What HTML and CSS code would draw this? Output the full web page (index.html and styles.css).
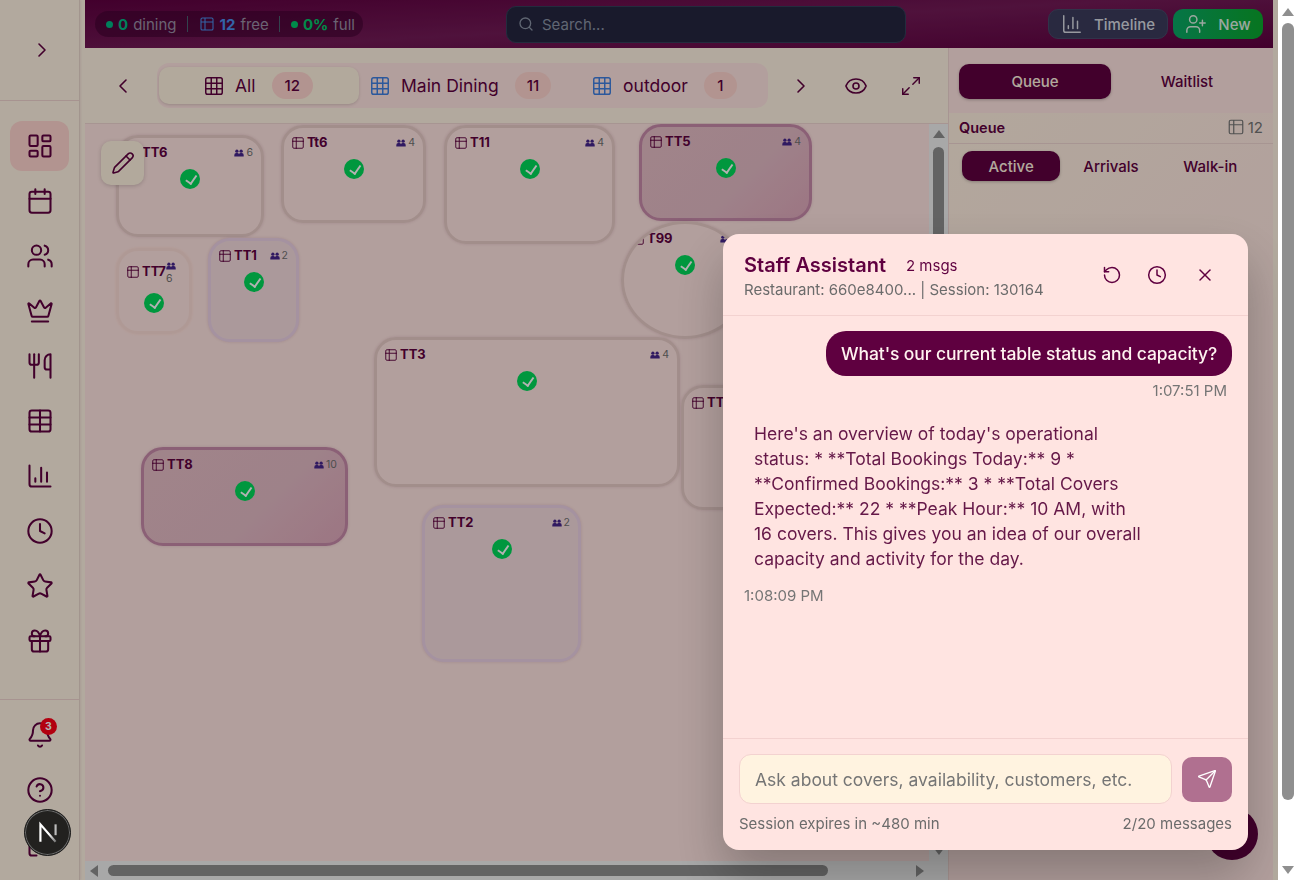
FILE: index.html
```html
<!DOCTYPE html>
<html lang="en">
<head>
    <meta charset="UTF-8">
    <title>Floor Plan</title>
    <link rel="stylesheet" href="styles.css">
</head>
<body>
    <!-- icon sprite -->
    <svg class="sprite" xmlns="http://www.w3.org/2000/svg">
        <symbol id="i-dash" viewBox="0 0 24 24"><rect x="3" y="3" width="7" height="9" rx="1"/><rect x="14" y="3" width="7" height="5" rx="1"/><rect x="14" y="12" width="7" height="9" rx="1"/><rect x="3" y="16" width="7" height="5" rx="1"/></symbol>
        <symbol id="i-cal" viewBox="0 0 24 24"><path d="M8 2v4M16 2v4"/><rect x="3" y="4" width="18" height="18" rx="2"/><path d="M3 10h18"/></symbol>
        <symbol id="i-users" viewBox="0 0 24 24"><path d="M16 21v-2a4 4 0 0 0-4-4H6a4 4 0 0 0-4 4v2"/><circle cx="9" cy="7" r="4"/><path d="M22 21v-2a4 4 0 0 0-3-3.87"/><path d="M16 3.13a4 4 0 0 1 0 7.75"/></symbol>
        <symbol id="i-crown" viewBox="0 0 24 24"><path d="M11.562 3.266a.5.5 0 0 1 .876 0L15.39 8.87a1 1 0 0 0 1.516.294L21.183 5.5a.5.5 0 0 1 .798.519l-2.834 10.246a1 1 0 0 1-.956.734H5.81a1 1 0 0 1-.957-.734L2.02 6.02a.5.5 0 0 1 .798-.519l4.276 3.664a1 1 0 0 0 1.516-.294z"/><path d="M5 21h14"/></symbol>
        <symbol id="i-utensils" viewBox="0 0 24 24"><path d="M3 2v7c0 1.1.9 2 2 2h4a2 2 0 0 0 2-2V2"/><path d="M7 2v20"/><path d="M21 15V2a5 5 0 0 0-5 5v6c0 1.1.9 2 2 2h3Zm0 0v7"/></symbol>
        <symbol id="i-table" viewBox="0 0 24 24"><path d="M12 3v18"/><rect x="3" y="3" width="18" height="18" rx="2"/><path d="M3 9h18M3 15h18"/></symbol>
        <symbol id="i-chart" viewBox="0 0 24 24"><path d="M3 3v16a2 2 0 0 0 2 2h16"/><path d="M18 17V9M13 17V5M8 17v-3"/></symbol>
        <symbol id="i-clock" viewBox="0 0 24 24"><circle cx="12" cy="12" r="10"/><path d="M12 6v6l4 2"/></symbol>
        <symbol id="i-star" viewBox="0 0 24 24"><path d="M11.525 2.295a.53.53 0 0 1 .95 0l2.31 4.679a2.123 2.123 0 0 0 1.595 1.16l5.166.756a.53.53 0 0 1 .294.904l-3.736 3.638a2.123 2.123 0 0 0-.611 1.878l.882 5.14a.53.53 0 0 1-.771.56l-4.618-2.428a2.122 2.122 0 0 0-1.973 0L6.396 21.01a.53.53 0 0 1-.77-.56l.881-5.139a2.122 2.122 0 0 0-.611-1.879L2.16 9.795a.53.53 0 0 1 .294-.906l5.165-.755a2.122 2.122 0 0 0 1.597-1.16z"/></symbol>
        <symbol id="i-gift" viewBox="0 0 24 24"><rect x="3" y="8" width="18" height="4" rx="1"/><path d="M12 8v13"/><path d="M19 12v7a2 2 0 0 1-2 2H7a2 2 0 0 1-2-2v-7"/><path d="M7.5 8a2.5 2.5 0 0 1 0-5A4.8 8 0 0 1 12 8a4.8 8 0 0 1 4.5-5 2.5 2.5 0 0 1 0 5"/></symbol>
        <symbol id="i-bell" viewBox="0 0 24 24"><path d="M10.268 21a2 2 0 0 0 3.464 0"/><path d="M3.262 15.326A1 1 0 0 0 4 17h16a1 1 0 0 0 .74-1.673C19.41 13.956 18 12.499 18 8A6 6 0 0 0 6 8c0 4.499-1.411 5.956-2.738 7.326"/></symbol>
        <symbol id="i-help" viewBox="0 0 24 24"><circle cx="12" cy="12" r="10"/><path d="M9.09 9a3 3 0 0 1 5.83 1c0 2-3 3-3 3"/><path d="M12 17h.01"/></symbol>
        <symbol id="i-logout" viewBox="0 0 24 24"><path d="M9 21H5a2 2 0 0 1-2-2V5a2 2 0 0 1 2-2h4"/><path d="m16 17 5-5-5-5"/><path d="M21 12H9"/></symbol>
        <symbol id="i-right" viewBox="0 0 24 24"><path d="m9 18 6-6-6-6"/></symbol>
        <symbol id="i-left" viewBox="0 0 24 24"><path d="m15 18-6-6 6-6"/></symbol>
        <symbol id="i-grid" viewBox="0 0 24 24"><rect x="3" y="3" width="18" height="18" rx="2"/><path d="M3 9h18M3 15h18M9 3v18M15 3v18"/></symbol>
        <symbol id="i-search" viewBox="0 0 24 24"><circle cx="11" cy="11" r="8"/><path d="m21 21-4.3-4.3"/></symbol>
        <symbol id="i-tbl" viewBox="0 0 24 24"><path d="M9 3H5a2 2 0 0 0-2 2v4m6-6h10a2 2 0 0 1 2 2v4M9 3v18m0 0h10a2 2 0 0 0 2-2V9M9 21H5a2 2 0 0 1-2-2V9m0 0h18"/></symbol>
        <symbol id="i-userplus" viewBox="0 0 24 24"><path d="M16 21v-2a4 4 0 0 0-4-4H6a4 4 0 0 0-4 4v2"/><circle cx="9" cy="7" r="4"/><path d="M19 8v6M22 11h-6"/></symbol>
        <symbol id="i-eye" viewBox="0 0 24 24"><path d="M2.062 12.348a1 1 0 0 1 0-.696 10.75 10.75 0 0 1 19.876 0 1 1 0 0 1 0 .696 10.75 10.75 0 0 1-19.876 0"/><circle cx="12" cy="12" r="3"/></symbol>
        <symbol id="i-expand" viewBox="0 0 24 24"><path d="M15 3h6v6"/><path d="m21 3-7 7"/><path d="m3 21 7-7"/><path d="M9 21H3v-6"/></symbol>
        <symbol id="i-pencil" viewBox="0 0 24 24"><path d="M21.174 6.812a1 1 0 0 0-3.986-3.987L3.842 16.174a2 2 0 0 0-.5.83l-1.321 4.352a.5.5 0 0 0 .623.622l4.353-1.32a2 2 0 0 0 .83-.497z"/><path d="m15 5 4 4"/></symbol>
        <symbol id="i-undo" viewBox="0 0 24 24"><path d="M3 12a9 9 0 1 0 9-9 9.75 9.75 0 0 0-6.74 2.74L3 8"/><path d="M3 3v5h5"/></symbol>
        <symbol id="i-x" viewBox="0 0 24 24"><path d="M18 6 6 18"/><path d="m6 6 12 12"/></symbol>
        <symbol id="i-send" viewBox="0 0 24 24"><path d="M14.536 21.686a.5.5 0 0 0 .937-.024l6.5-19a.496.496 0 0 0-.635-.635l-19 6.5a.5.5 0 0 0-.024.937l7.93 3.18a2 2 0 0 1 1.112 1.11z"/><path d="m21.854 2.147-10.94 10.939"/></symbol>
        <symbol id="i-ppl" viewBox="0 0 16 12"><circle class="solid" cx="4.6" cy="3" r="2.6"/><circle class="solid" cx="11.4" cy="3" r="2.6"/><path class="solid" d="M0.5 11.5V9a3 3 0 0 1 3-3h2a2.6 2.6 0 0 1 2.5 1.8A2.6 2.6 0 0 1 10.500 6h2a3 3 0 0 1 3 3v2.500z"/></symbol>
    </svg>

    <div class="page">
        <div class="shell">
            <!-- Sidebar -->
            <aside class="sidebar">
                <div class="side-top"><svg class="ic thin"><use href="#i-right"/></svg></div>
                <nav class="side-nav">
                    <a class="side-item active"><svg class="ic ic-28"><use href="#i-dash"/></svg></a>
                    <a class="side-item"><svg class="ic ic-28"><use href="#i-cal"/></svg></a>
                    <a class="side-item"><svg class="ic ic-28"><use href="#i-users"/></svg></a>
                    <a class="side-item"><svg class="ic ic-28"><use href="#i-crown"/></svg></a>
                    <a class="side-item"><svg class="ic ic-28"><use href="#i-utensils"/></svg></a>
                    <a class="side-item"><svg class="ic ic-28"><use href="#i-table"/></svg></a>
                    <a class="side-item"><svg class="ic ic-28"><use href="#i-chart"/></svg></a>
                    <a class="side-item"><svg class="ic ic-28"><use href="#i-clock"/></svg></a>
                    <a class="side-item"><svg class="ic ic-28"><use href="#i-star"/></svg></a>
                    <a class="side-item"><svg class="ic ic-28"><use href="#i-gift"/></svg></a>
                </nav>
                <div class="side-bottom">
                    <a class="side-item bell"><svg class="ic ic-28"><use href="#i-bell"/></svg><span class="bell-count">3</span></a>
                    <a class="side-item"><svg class="ic ic-28"><use href="#i-help"/></svg></a>
                    <a class="side-item"><svg class="ic ic-28"><use href="#i-logout"/></svg></a>
                </div>
            </aside>

            <div class="main">
                <!-- Top bar -->
                <header class="topbar">
                    <div class="stats">
                        <span class="stat"><i class="dot dot-teal"></i><b class="green">0</b> dining</span>
                        <span class="stat"><svg class="ic ic-16 thin blue"><use href="#i-tbl"/></svg><b class="blue">12</b> free</span>
                        <span class="stat"><i class="dot"></i><b class="bright">0%</b> full</span>
                    </div>
                    <label class="search">
                        <svg class="ic ic-16"><use href="#i-search"/></svg>
                        <input type="text" placeholder="Search...">
                    </label>
                    <div class="top-actions">
                        <button class="btn-timeline"><svg class="ic ic-22 thin"><use href="#i-chart"/></svg>Timeline</button>
                        <button class="btn-new"><svg class="ic ic-22 thin"><use href="#i-userplus"/></svg>New</button>
                    </div>
                </header>

                <div class="content">
                    <section class="floor-col">
                        <div class="zonebar">
                            <button class="icon-btn"><svg class="ic thin"><use href="#i-left"/></svg></button>
                            <div class="zones">
                                <div class="zone zone-on"><svg class="ic ic-22 thin"><use href="#i-grid"/></svg><span>All</span><em>12</em></div>
                                <div class="zone zone-main"><svg class="ic ic-22 thin blue"><use href="#i-grid"/></svg><span>Main Dining</span><em>11</em></div>
                                <div class="zone zone-out"><svg class="ic ic-22 thin blue"><use href="#i-grid"/></svg><span>outdoor</span><em>1</em></div>
                            </div>
                            <button class="icon-btn next"><svg class="ic thin"><use href="#i-right"/></svg></button>
                            <button class="icon-btn eye"><svg class="ic thin"><use href="#i-eye"/></svg></button>
                            <button class="icon-btn expand"><svg class="ic ic-22 thin"><use href="#i-expand"/></svg></button>
                        </div>

                        <div class="canvas-wrap">
                            <div class="canvas">
                                <div class="tbl t-tt6"><div class="tbl-head"><span class="tbl-name"><svg class="ic ic-14"><use href="#i-tbl"/></svg>TT6</span><span class="tbl-seats"><svg class="ppl"><use href="#i-ppl"/></svg>6</span></div><i class="ok"></i></div>
                                <div class="tbl t-tt6b"><div class="tbl-head"><span class="tbl-name"><svg class="ic ic-14"><use href="#i-tbl"/></svg>Tt6</span><span class="tbl-seats"><svg class="ppl"><use href="#i-ppl"/></svg>4</span></div><i class="ok"></i></div>
                                <div class="tbl t-t11"><div class="tbl-head"><span class="tbl-name"><svg class="ic ic-14"><use href="#i-tbl"/></svg>T11</span><span class="tbl-seats"><svg class="ppl"><use href="#i-ppl"/></svg>4</span></div><i class="ok"></i></div>
                                <div class="tbl tbl-sel t-tt5"><div class="tbl-head"><span class="tbl-name"><svg class="ic ic-14"><use href="#i-tbl"/></svg>TT5</span><span class="tbl-seats"><svg class="ppl"><use href="#i-ppl"/></svg>4</span></div><i class="ok"></i></div>
                                <div class="tbl tbl-peach t-tt7"><div class="tbl-head"><span class="tbl-name"><svg class="ic ic-14"><use href="#i-tbl"/></svg>TT7</span><span class="tbl-seats stacked"><svg class="ppl"><use href="#i-ppl"/></svg>6</span></div><i class="ok"></i></div>
                                <div class="tbl tbl-blue t-tt1"><div class="tbl-head"><span class="tbl-name"><svg class="ic ic-14"><use href="#i-tbl"/></svg>TT1</span><span class="tbl-seats"><svg class="ppl"><use href="#i-ppl"/></svg>2</span></div><i class="ok"></i></div>
                                <div class="tbl tbl-round t-t99"><div class="tbl-head"><span class="tbl-name"><svg class="ic ic-14"><use href="#i-tbl"/></svg>T99</span><span class="tbl-seats"><svg class="ppl"><use href="#i-ppl"/></svg>2</span></div><i class="ok"></i></div>
                                <div class="tbl t-tt3"><div class="tbl-head"><span class="tbl-name"><svg class="ic ic-14"><use href="#i-tbl"/></svg>TT3</span><span class="tbl-seats"><svg class="ppl"><use href="#i-ppl"/></svg>4</span></div><i class="ok"></i></div>
                                <div class="tbl t-tt4"><div class="tbl-head"><span class="tbl-name"><svg class="ic ic-14"><use href="#i-tbl"/></svg>TT4</span><span class="tbl-seats"><svg class="ppl"><use href="#i-ppl"/></svg>4</span></div><i class="ok"></i></div>
                                <div class="tbl tbl-sel t-tt8"><div class="tbl-head"><span class="tbl-name"><svg class="ic ic-14"><use href="#i-tbl"/></svg>TT8</span><span class="tbl-seats"><svg class="ppl"><use href="#i-ppl"/></svg>10</span></div><i class="ok"></i></div>
                                <div class="tbl tbl-blue t-tt2"><div class="tbl-head"><span class="tbl-name"><svg class="ic ic-14"><use href="#i-tbl"/></svg>TT2</span><span class="tbl-seats"><svg class="ppl"><use href="#i-ppl"/></svg>2</span></div><i class="ok"></i></div>
                                <button class="edit-btn"><svg class="ic thin"><use href="#i-pencil"/></svg></button>
                            </div>
                            <div class="vbar"><i class="arr arr-up"></i><i class="vthumb"></i><i class="arr arr-down"></i></div>
                            <div class="hbar"><i class="arr arr-left"></i><i class="hthumb"></i><i class="arr arr-right"></i></div>
                            <div class="corner"></div>
                        </div>
                    </section>

                    <!-- Right panel -->
                    <section class="queue-col">
                        <div class="seg">
                            <button class="seg-btn seg-on">Queue</button>
                            <button class="seg-btn">Waitlist</button>
                        </div>
                        <div class="queue-head">
                            <strong>Queue</strong>
                            <span class="queue-count"><svg class="ic ic-18 thin"><use href="#i-tbl"/></svg>12</span>
                        </div>
                        <div class="sub-tabs">
                            <button class="sub-tab sub-on">Active</button>
                            <button class="sub-tab">Arrivals</button>
                            <button class="sub-tab">Walk-in</button>
                        </div>
                    </section>
                </div>
            </div>
            <button class="fab"></button>

            <!-- Assistant dialog -->
            <div class="overlay">
                <div class="chat">
                    <div class="chat-head">
                        <div class="chat-titles">
                            <div class="chat-title"><h2>Staff Assistant</h2><span>2 msgs</span></div>
                            <p>Restaurant: 660e8400... | Session: 130164</p>
                        </div>
                        <div class="chat-tools">
                            <svg class="ic ic-20"><use href="#i-undo"/></svg>
                            <svg class="ic ic-20"><use href="#i-clock"/></svg>
                            <svg class="ic ic-20"><use href="#i-x"/></svg>
                        </div>
                    </div>
                    <div class="chat-body">
                        <div class="bubble">What's our current table status and capacity?</div>
                        <div class="stamp stamp-right">1:07:51 PM</div>
                        <div class="answer">Here's an overview of today's operational status: * **Total Bookings Today:** 9 * **Confirmed Bookings:** 3 * **Total Covers Expected:** 22 * **Peak Hour:** 10 AM, with 16 covers. This gives you an idea of our overall capacity and activity for the day.</div>
                        <div class="stamp">1:08:09 PM</div>
                    </div>
                    <div class="chat-foot">
                        <div class="chat-input">
                            <input type="text" placeholder="Ask about covers, availability, customers, etc.">
                            <button class="send"><svg class="ic ic-20 thin"><use href="#i-send"/></svg></button>
                        </div>
                        <div class="chat-meta"><span>Session expires in ~480 min</span><span>2/20 messages</span></div>
                    </div>
                </div>
            </div>

            <button class="next-badge" aria-label="Next.js">
                <svg viewBox="0 0 24 24" width="26" height="26"><defs><linearGradient id="n-fade" x1="0" y1="0" x2="1" y2="1"><stop offset="0.55" stop-color="#fff"/><stop offset="1" stop-color="#777"/></linearGradient></defs><path d="M5 20V4l14 16" stroke="url(#n-fade)"/><path d="M19 4v10" class="n-b"/></svg>
            </button>
        </div>

        <div class="page-bar"><i class="arr arr-up"></i><i class="page-thumb"></i><i class="arr arr-down"></i></div>
    </div>
</body>
</html>
```
FILE: styles.css
```css
* {
    box-sizing: border-box;
}

body {
    margin: 0;
    font-family: Inter, "Liberation Sans", sans-serif;
    color: #5f0040;
    overflow: hidden;
}

button {
    font-family: inherit;
    border: none;
    background: none;
    color: inherit;
    padding: 0;
}

.sprite {
    display: none;
}

.ic {
    width: 24px;
    height: 24px;
    fill: none;
    stroke: currentColor;
    stroke-width: 2;
    stroke-linecap: round;
    stroke-linejoin: round;
    flex: none;
}
.ic-28 { width: 28px; height: 28px; stroke-width: 1.75; }
.ic-22 { width: 22px; height: 22px; }
.ic-20 { width: 20px; height: 20px; }
.ic-18 { width: 18px; height: 18px; }
.ic-16 { width: 16px; height: 16px; }
.ic-14 { width: 14px; height: 14px; }
.thin { stroke-width: 1.6; }

.page {
    display: flex;
    width: 1298px;
    height: 880px;
    background: #fff;
}

.shell {
    position: relative;
    display: flex;
    width: 1278px;
    height: 880px;
    background: #fff3e3;
    overflow: hidden;
}

/* sidebar */
.sidebar {
    width: 80px;
    flex: none;
    display: flex;
    flex-direction: column;
    border-right: 1px solid #e8d6cc;
    box-shadow: 1px 0 2px rgba(95, 0, 64, 0.08);
}
.side-top {
    height: 101px;
    display: flex;
    align-items: center;
    justify-content: center;
    padding-left: 5px;
    border-bottom: 1px solid #efd3cf;
}
.side-nav {
    flex: 1;
    display: flex;
    flex-direction: column;
    gap: 5px;
    padding: 20px 10px 0;
}
.side-item {
    position: relative;
    height: 50px;
    display: flex;
    align-items: center;
    justify-content: center;
    border-radius: 12px;
    flex: none;
}
.side-item.active {
    background: #ffd5ce;
}
.side-bottom {
    height: 181px;
    border-top: 1px solid #efd3cf;
    padding: 10px 10px 0;
    display: flex;
    flex-direction: column;
    gap: 5px;
}
.bell-count {
    position: absolute;
    top: 8px;
    left: 30px;
    width: 17px;
    height: 17px;
    border-radius: 50%;
    background: #ff0018;
    color: #fff;
    font-size: 10.5px;
    font-weight: 700;
    line-height: 17px;
    text-align: center;
}

/* top bar */
.main {
    flex: 1;
    min-width: 0;
    margin: 0 5px;
    display: flex;
    flex-direction: column;
}
.topbar {
    height: 48px;
    flex: none;
    display: flex;
    align-items: center;
    padding: 0 10px;
    background: linear-gradient(177deg, #5f0040 0%, #721a56 50%, #5f0040 100%);
}
.stats {
    width: 268px;
    height: 26px;
    display: flex;
    align-items: center;
    padding: 0 11px;
    border-radius: 13px;
    background: rgba(60, 0, 45, 0.55);
    font-size: 15px;
    color: #9a8fa5;
}
.stat {
    display: flex;
    align-items: center;
    gap: 5px;
    height: 16px;
    white-space: nowrap;
}
.stat + .stat {
    margin-left: 10px;
    padding-left: 11px;
    border-left: 1px solid #4a6070;
}
.stat b {
    font-weight: 700;
}
.dot {
    width: 7px;
    height: 7px;
    border-radius: 50%;
    background: #00c66a;
}
.dot-teal { background: #00b884; }
.green { color: #00b884; }
.bright { color: #00c66a; }
.blue { color: #4a90ee; }
.search {
    width: 400px;
    height: 37px;
    margin-left: 143px;
    display: flex;
    align-items: center;
    gap: 6px;
    padding: 0 11px;
    border: 1px solid #33405a;
    border-radius: 10px;
    background: #24263f;
    color: #8a93a5;
}
.search input {
    flex: 1;
    border: none;
    outline: none;
    background: none;
    font: 15px Inter, sans-serif;
}
.search input::placeholder {
    color: #8a93a5;
    opacity: 1;
}
.top-actions {
    margin-left: auto;
    display: flex;
    gap: 5px;
}
.btn-timeline,
.btn-new {
    height: 30px;
    display: flex;
    align-items: center;
    justify-content: center;
    font-size: 15px;
    font-weight: 500;
    border-radius: 10px;
}
.btn-timeline {
    width: 120px;
    gap: 11px;
    background: #3c3c5c;
    border: 1px solid #47496a;
    color: #d9dce4;
}
.btn-new {
    width: 90px;
    gap: 11px;
    background: linear-gradient(90deg, #0aa866, #0ba82e);
    color: #dff0e5;
}

/* floor */
.content {
    flex: 1;
    min-height: 0;
    display: flex;
}
.floor-col {
    width: 863px;
    display: flex;
    flex-direction: column;
}
.zonebar {
    height: 76px;
    flex: none;
    display: flex;
    align-items: center;
    border-bottom: 1px solid #f0d6d2;
    padding-left: 28px;
}
.icon-btn {
    width: 20px;
    height: 20px;
    display: flex;
    align-items: center;
    justify-content: center;
    flex: none;
}
.icon-btn.next { margin-left: 23px; }
.icon-btn.eye { margin-left: 35px; }
.icon-btn.expand { margin-left: 35px; }
.zones {
    width: 611px;
    height: 45px;
    margin-left: 24px;
    display: flex;
    align-items: center;
    padding: 0 2px;
    border-radius: 12px;
    background: #ffe4e1;
}
.zone {
    height: 37px;
    display: flex;
    align-items: center;
    border-radius: 10px;
    font-size: 17.5px;
    white-space: nowrap;
}
.zone span {
    margin-left: 10px;
}
.zone em {
    font-style: normal;
    font-size: 15px;
    font-weight: 500;
    height: 27px;
    min-width: 33px;
    padding: 0 12px;
    line-height: 27px;
    text-align: center;
    border-radius: 14px;
    background: #ffd5ce;
    margin-left: 16px;
}
.zone-on {
    width: 200px;
    padding-left: 44px;
    background: #fff3e0;
    box-shadow: 0 1px 3px rgba(0, 0, 0, 0.15);
}
.zone-on em {
    padding: 0 13px;
}
.zone-main { padding-left: 10px; }
.zone-out { padding-left: 40px; }
.zone .blue { color: #3f7fe0; }
.canvas-wrap {
    flex: 1;
    min-height: 0;
    display: grid;
    grid-template-columns: 1fr 19px;
    grid-template-rows: 1fr 19px;
}
.canvas {
    position: relative;
    overflow: hidden;
    background: #ffe4e1;
}
.tbl {
    position: absolute;
    display: flex;
    flex-direction: column;
    align-items: center;
    padding: 7px 8px 7px 7px;
    border: 3px solid #e8ccc8;
    border-radius: 22px;
    box-shadow: 0 0 3px rgba(95, 0, 64, 0.15);
}
.tbl-sel {
    border-color: #c78aaa;
    background: linear-gradient(135deg, #e6bec6, #e3bac5 60%, #e0a9bc);
}
.tbl-peach {
    border-color: #fbdcd6;
    box-shadow: 0 0 2px rgba(255, 180, 150, 0.3);
}
.tbl-peach .tbl-head {
    justify-content: flex-start;
    align-items: center;
    height: 26px;
}
.tbl-blue {
    border-color: #ecd2e6;
    background: #f5dcdf;
}
.tbl-round {
    border-radius: 50%;
    overflow: hidden;
}
.tbl-head {
    width: 100%;
    min-height: 15px;
    display: flex;
    justify-content: space-between;
    align-items: flex-start;
    margin-bottom: 9px;
}
.tbl-name {
    display: flex;
    align-items: flex-start;
    gap: 2px;
    font-size: 13px;
    font-weight: 700;
    line-height: 14px;
}
.tbl-name .ic {
    stroke-width: 1.6;
    margin-top: 1px;
}
.tbl-seats {
    display: flex;
    align-items: center;
    gap: 2px;
    margin-top: 1px;
    font-size: 10.5px;
    line-height: 14px;
    color: #707070;
}
.stacked {
    flex-direction: column;
    align-items: flex-start;
    align-self: flex-end;
    gap: 2px;
    margin-top: 0;
    margin-bottom: -2px;
}
.ppl {
    width: 10px;
    height: 8px;
}
.solid { fill: #46258c; }
.ok {
    position: relative;
    width: 20px;
    height: 20px;
    margin-left: 1px;
    border-radius: 50%;
    background: #00d95a;
    flex: none;
}
.ok::after {
    content: "";
    position: absolute;
    left: 8px;
    top: 4px;
    width: 4.5px;
    height: 8.500px;
    border: solid #fff;
    border-width: 0 2px 2px 0;
    transform: rotate(35deg);
}
.t-tt6 { left: 31px; top: 11px; width: 148px; height: 102px; }
.t-tt6b { left: 196px; top: 1px; width: 145px; height: 98px; }
.t-t11 { left: 359px; top: 1px; width: 171px; height: 119px; }
.t-tt5 { left: 554px; top: 0; width: 173px; height: 97px; }
.t-tt7 { left: 31px; top: 124px; width: 76px; height: 86px; }
.t-tt1 { left: 123px; top: 114px; width: 91px; height: 104px; }
.t-t99 { left: 536px; top: 97px; width: 128px; height: 118px; }
.t-tt3 { left: 289px; top: 213px; width: 306px; height: 150px; }
.t-tt4 { left: 596px; top: 261px; width: 118px; height: 125px; }
.t-tt8 { left: 56px; top: 323px; width: 207px; height: 99px; }
.t-tt2 { left: 337px; top: 381px; width: 159px; height: 157px; }
.edit-btn {
    position: absolute;
    left: 16px;
    top: 17px;
    width: 43px;
    height: 44px;
    display: flex;
    align-items: center;
    justify-content: center;
    border-radius: 10px;
    background: #fff3e0;
    box-shadow: 0 1px 4px rgba(0, 0, 0, 0.18);
}

/* scrollbars */
.vbar,
.hbar,
.corner {
    background: #f1f1f1;
}
.vbar,
.page-bar {
    display: flex;
    flex-direction: column;
    align-items: center;
}
.hbar {
    display: flex;
    align-items: center;
    padding: 0 5px;
}
.arr {
    width: 0;
    height: 0;
    flex: none;
    border-style: solid;
    border-color: transparent;
}
.arr-up { border-width: 0 6px 8px; border-bottom-color: #8f8f8f; margin-top: 6px; }
.arr-down { border-width: 8px 6px 0; border-top-color: #8f8f8f; margin-top: auto; margin-bottom: 6px; }
.arr-left { border-width: 6px 8px 6px 0; border-right-color: #8f8f8f; }
.arr-right { border-width: 6px 0 6px 8px; border-left-color: #8f8f8f; margin-left: auto; }
.vthumb {
    width: 11px;
    height: 566px;
    margin-top: 9px;
    border-radius: 6px;
    background: #8f8f8f;
}
.hthumb {
    width: 720px;
    height: 11px;
    margin-left: 10px;
    border-radius: 6px;
    background: #8f8f8f;
}
.page-bar {
    width: 20px;
    background: #fff;
}
.page-bar .arr-up { margin-top: 8px; }
.page-thumb {
    width: 12px;
    height: 777px;
    margin-top: 7px;
    border-radius: 6px;
    background: #8f8f8f;
}

/* queue column */
.queue-col {
    flex: 1;
    min-width: 0;
    border-left: 1px solid #f0d6d2;
    background: linear-gradient(135deg, #fff1e0 0%, #ffe4e1 60%);
}
.seg {
    height: 65px;
    display: flex;
    align-items: flex-start;
    padding: 16px 10px 0;
    background: #ffe4e1;
    gap: 0;
}
.seg-btn {
    width: 152px;
    height: 35px;
    font-size: 15px;
    font-weight: 500;
    border-radius: 10px;
}
.seg-on {
    background: #5f0040;
    color: #fff3e0;
    box-shadow: 0 1px 3px rgba(0, 0, 0, 0.25);
}
.queue-head {
    height: 31px;
    display: flex;
    align-items: center;
    justify-content: space-between;
    padding: 0 10px 2px;
    border-bottom: 1px solid #f0d6d2;
    font-size: 15px;
}
.queue-head strong {
    font-size: 14.5px;
    font-weight: 600;
}
.queue-count {
    display: flex;
    align-items: center;
    gap: 3px;
    color: #757575;
}
.sub-tabs {
    display: flex;
    padding: 7px 13px 0;
}
.sub-tab {
    width: 100px;
    height: 30px;
    font-size: 15px;
    font-weight: 500;
    border-radius: 10px;
}
.sub-on {
    width: 99px;
    margin-right: 1px;
    background: #5f0040;
    color: #fff3e0;
    box-shadow: 0 1px 3px rgba(0, 0, 0, 0.25);
}
.fab {
    position: absolute;
    left: 1206px;
    top: 808px;
    width: 52px;
    height: 52px;
    border-radius: 50%;
    background: #5f0040;
}

/* dialog */
.overlay {
    position: absolute;
    inset: 0;
    display: flex;
    align-items: flex-end;
    justify-content: flex-end;
    padding: 30px;
    background: rgba(0, 0, 0, 0.3);
    backdrop-filter: blur(0.5px);
}
.chat {
    width: 525px;
    height: 616px;
    display: flex;
    flex-direction: column;
    border-radius: 16px;
    background: #ffe4e1;
    box-shadow: 0 25px 50px rgba(0, 0, 0, 0.25);
    color: #5f0040;
}
.chat-head {
    height: 82px;
    flex: none;
    display: flex;
    justify-content: space-between;
    padding: 19px 21px;
    border-bottom: 1px solid #f3d2d0;
}
.chat-title {
    display: flex;
    align-items: center;
    gap: 20px;
}
.chat-title h2 {
    margin: 0;
    font-size: 20px;
    line-height: 24px;
    font-weight: 600;
}
.chat-title span {
    font-size: 15px;
}
.chat-titles p {
    margin: 4px 0 0;
    font-size: 15px;
    line-height: 17px;
    color: #6b6b6b;
}
.chat-tools {
    display: flex;
    align-items: center;
    gap: 25px;
    padding-right: 12px;
}
.chat-tools .ic {
    stroke-width: 1.8;
}
.chat-tools .ic:last-child {
    margin-left: 3px;
}
.chat-body {
    flex: 1;
    min-height: 0;
    display: flex;
    flex-direction: column;
    padding: 15px 16px;
}
.bubble {
    align-self: flex-end;
    height: 45px;
    padding: 0 15px;
    line-height: 45px;
    font-size: 17.5px;
    font-weight: 500;
    letter-spacing: -0.11px;
    border-radius: 20px;
    background: #5f0040;
    color: #fff3f0;
    white-space: nowrap;
}
.stamp {
    margin: 6px 5px 0;
    font-size: 15px;
    line-height: 17px;
    color: #757575;
}
.stamp-right {
    text-align: right;
}
.answer {
    width: 419px;
    margin-top: 10px;
    padding: 12px 15px 10px;
    font-size: 17.5px;
    line-height: 25px;
    color: #651848;
}
.chat-foot {
    height: 112px;
    flex: none;
    padding: 15px 16px 0;
    border-top: 1px solid #f3d2d0;
}
.chat-input {
    display: flex;
    align-items: center;
    gap: 10px;
}
.chat-input input {
    flex: 1;
    min-width: 0;
    height: 50px;
    padding: 0 15px;
    border: 1px solid #f3d2d0;
    border-radius: 12px;
    outline: none;
    background: #fff3e0;
    font: 17.5px Inter, sans-serif;
}
.chat-input input::placeholder {
    color: #757575;
    opacity: 1;
}
.send {
    width: 50px;
    height: 45px;
    display: flex;
    align-items: center;
    justify-content: center;
    flex: none;
    border-radius: 10px;
    background: #b07090;
    color: #fff;
}
.chat-meta {
    display: flex;
    justify-content: space-between;
    margin-top: 11px;
    font-size: 15px;
    line-height: 17px;
    color: #6b6b6b;
}

/* framework dev badge */
.next-badge {
    position: absolute;
    left: 24px;
    top: 809px;
    width: 47px;
    height: 47px;
    display: flex;
    align-items: center;
    justify-content: center;
    border-radius: 50%;
    background: #22211f;
    border: 1px solid #1a1a1a;
    box-shadow: inset 0 0 0 1px #6a6a6a;
}
.next-badge svg {
    fill: none;
    stroke-width: 2;
}
.n-b { stroke: #bbb; }
```
